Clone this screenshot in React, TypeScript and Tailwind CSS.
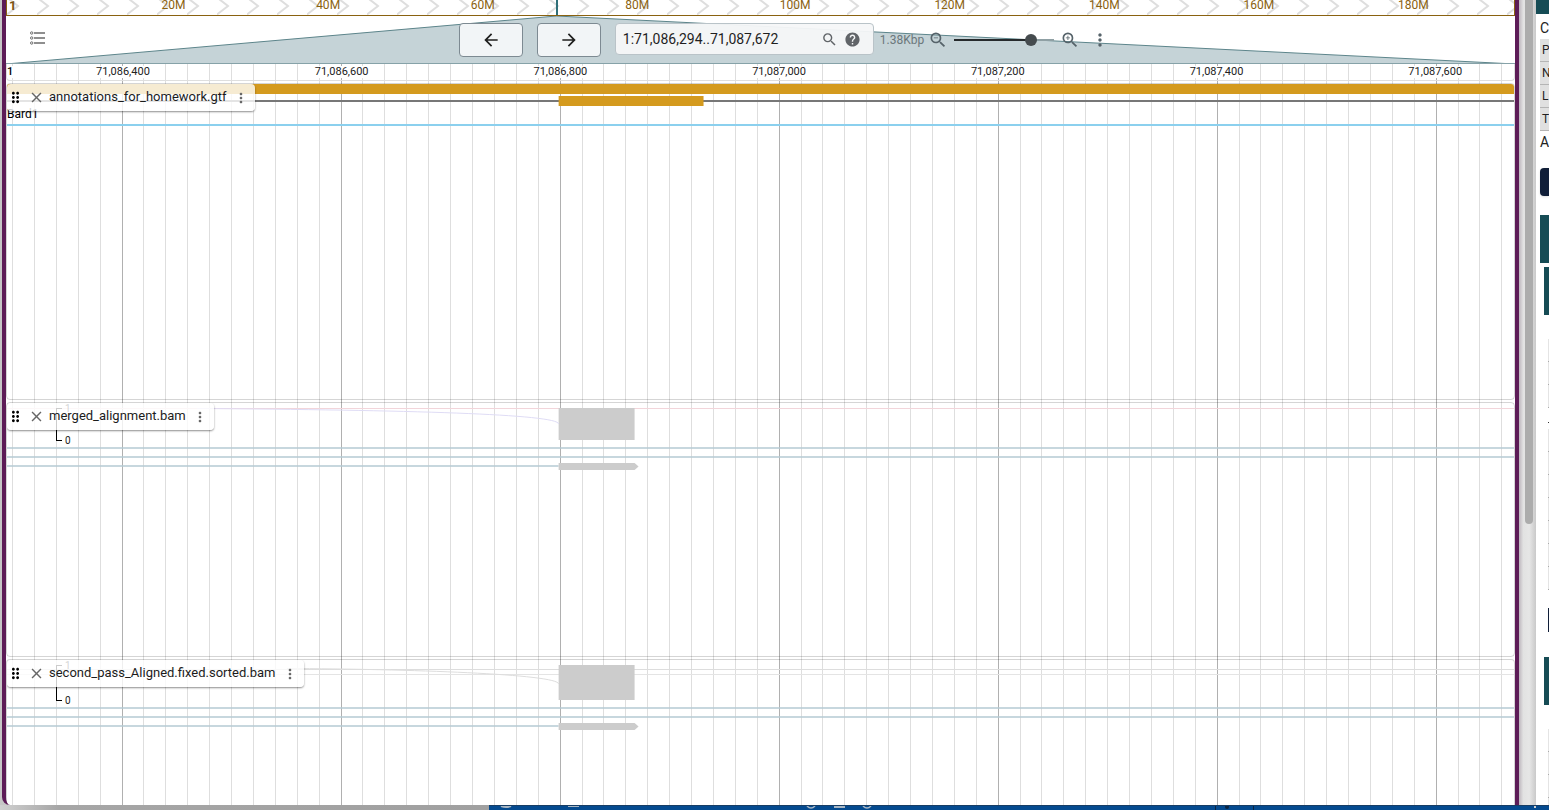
import React from "react";
import {
  MdArrowBack,
  MdArrowForward,
  MdClose,
  MdDragIndicator,
  MdHelp,
  MdMoreVert,
  MdSearch,
  MdZoomIn,
  MdZoomOut,
} from "react-icons/md";

const START = 71086294;
const SPAN = 1378;
const MAJOR = 200;
const MINOR = 20;

const percent = (bp: number) => `${((bp - START) / SPAN) * 100}%`;

const ticks: number[] = [];
for (let bp = Math.ceil(START / MINOR) * MINOR; bp < START + SPAN; bp += MINOR) {
  ticks.push(bp);
}
const majorTicks = ticks.filter((bp) => bp % MAJOR === 0);

const GENOME_MB = 195;
const overviewTicks = [20, 40, 60, 80, 100, 120, 140, 160, 180];

function Overview() {
  return (
    <div className="relative h-4 shrink-0 overflow-hidden border-x border-b border-[#8a6210] bg-white">
      <svg className="absolute inset-0 h-full w-full" aria-hidden="true">
        <defs>
          <pattern id="chevrons" width="30" height="20" patternUnits="userSpaceOnUse">
            <path d="M0 -2.500L11 6L0 14.500" fill="none" stroke="#dedede" strokeWidth="2" />
          </pattern>
        </defs>
        <rect width="100%" height="15" fill="url(#chevrons)" />
      </svg>
      <span className="absolute -top-0.5 left-0.5 text-[13px] font-bold leading-4 text-[#7a5310]">1</span>
      {overviewTicks.map((mb) => (
        <span
          key={mb}
          className="absolute -top-[3px] text-xs leading-4 text-[#8a6210]"
          style={{ left: `${(mb / GENOME_MB) * 100}%` }}
        >
          {mb}M
        </span>
      ))}
      <div
        className="absolute inset-y-0 w-0.5 bg-[#2f6f78]"
        style={{ left: `${(START / 1e6 / GENOME_MB) * 100}%` }}
      />
    </div>
  );
}

function TrackListIcon() {
  return (
    <svg width="16" height="16" viewBox="0 0 16 16" fill="none" stroke="#6b6b6b" aria-hidden="true">
      <circle cx="1.700" cy="3" r="1.200" />
      <circle cx="1.700" cy="8" r="1.200" />
      <circle cx="1.700" cy="13" r="1.200" />
      <path d="M4 3H15M4 8H15M4 13H15" strokeWidth="1.400" />
    </svg>
  );
}

function Toolbar() {
  const navButton =
    "flex h-[34px] w-16 items-center justify-center rounded border border-[#7d8a92] bg-[#f2f5f7] text-[#1f1f1f]";
  return (
    <div className="relative h-12 shrink-0">
      <svg
        className="absolute inset-0 h-full w-full"
        viewBox="0 0 1508 48"
        preserveAspectRatio="none"
        aria-hidden="true"
      >
        <path d="M550 0L0 48H1508Z" fill="#c5d3d7" />
        <path d="M0 48L550 0L1508 48" fill="none" stroke="#5d858b" vectorEffect="non-scaling-stroke" />
        <path d="M0 47.500H1508" stroke="#86a2a8" vectorEffect="non-scaling-stroke" />
      </svg>
      <div className="relative flex h-full items-center">
        <button type="button" aria-label="Open track selector" className="mb-1 flex w-12 pl-6">
          <TrackListIcon />
        </button>
        <div className="flex flex-1 items-center justify-center">
          <button type="button" aria-label="Pan left" className={navButton}>
            <MdArrowBack size={20} />
          </button>
          <button type="button" aria-label="Pan right" className={`ml-3.5 ${navButton}`}>
            <MdArrowForward size={20} />
          </button>
          <div className="ml-3.5 mb-0.5 flex h-8 w-[259px] items-center rounded border border-[#b9c3c8] bg-[#f5f7f8]/95 pl-[7px] pr-3 text-[#606468]">
            <input
              aria-label="Location"
              defaultValue="1:71,086,294..71,087,672"
              className="min-w-0 flex-1 bg-transparent text-sm text-[#1f1f1f] outline-none"
            />
            <button type="button" aria-label="Search">
              <MdSearch size={17} />
            </button>
            <button type="button" aria-label="Help" className="ml-1.5">
              <MdHelp size={17} />
            </button>
          </div>
          <span className="ml-1.5 text-xs text-[#6b777b]">1.38Kbp</span>
          <button type="button" aria-label="Zoom out" className="ml-1 text-[#56636a]">
            <MdZoomOut size={20} />
          </button>
          <input
            type="range"
            aria-label="Zoom"
            defaultValue={80}
            className="mx-1.5 h-3 w-[100px] appearance-none bg-transparent [&::-webkit-slider-runnable-track]:h-0.5 [&::-webkit-slider-runnable-track]:bg-[linear-gradient(to_right,#262a2c_76%,#8fa0a4_76%)] [&::-webkit-slider-thumb]:-mt-[5px] [&::-webkit-slider-thumb]:h-3 [&::-webkit-slider-thumb]:w-3 [&::-webkit-slider-thumb]:appearance-none [&::-webkit-slider-thumb]:rounded-full [&::-webkit-slider-thumb]:bg-[#454b4e]"
          />
          <button type="button" aria-label="Zoom in" className="text-[#56636a]">
            <MdZoomIn size={20} />
          </button>
          <button type="button" aria-label="View options" className="ml-2.5 text-[#56636a]">
            <MdMoreVert size={20} />
          </button>
        </div>
      </div>
    </div>
  );
}

function Gridlines() {
  return (
    <svg className="absolute inset-0 h-full w-full" shapeRendering="crispEdges" aria-hidden="true">
      {ticks.map((bp) => (
        <line
          key={bp}
          x1={percent(bp)}
          x2={percent(bp)}
          y1="0"
          y2="100%"
          stroke={bp % MAJOR === 0 ? "#b0b0b0" : "#dedede"}
        />
      ))}
    </svg>
  );
}

function Ruler() {
  return (
    <div className="relative h-[17px] shrink-0 overflow-hidden rounded-b border-x border-b border-[#dedede]">
      <span className="absolute left-0 top-0.5 bg-white text-[11px] font-medium leading-3 text-black">1</span>
      {majorTicks.map((bp) => (
        <span
          key={bp}
          className="absolute top-0.5 -translate-x-1/2 bg-white text-[11px] leading-3 text-[#222]"
          style={{ left: percent(bp) }}
        >
          {bp.toLocaleString("en-US")}
        </span>
      ))}
    </div>
  );
}

function TrackLabel({ name }: { name: string }) {
  return (
    <div className="absolute left-0 top-0 flex h-[27px] items-center rounded bg-white/80 pr-1.5 text-[#666] shadow-[0_1px_2px_rgba(0,0,0,0.45)]">
      <button type="button" aria-label={`Move ${name}`} className="text-black">
        <MdDragIndicator size={17} />
      </button>
      <button type="button" aria-label={`Close ${name}`} className="ml-1">
        <MdClose size={17} />
      </button>
      <span className="ml-1 whitespace-nowrap pb-0.5 text-[13px] leading-5 text-[#1c1c1c]">{name}</span>
      <button type="button" aria-label={`${name} menu`} className="ml-1.5">
        <MdMoreVert size={16} />
      </button>
    </div>
  );
}

function Track({ name, className, children }: { name: string; className: string; children: React.ReactNode }) {
  return (
    <section
      aria-label={name}
      className={`relative overflow-hidden rounded border border-[#2c2c2c]/20 ${className}`}
    >
      {children}
      <TrackLabel name={name} />
    </section>
  );
}

function AnnotationTrack() {
  return (
    <Track name="annotations_for_homework.gtf" className="h-[317px] shrink-0">
      <span className="absolute left-0 top-6 text-xs leading-3 text-black">Bard1</span>
      <svg className="absolute left-0 top-0 h-12 w-full" viewBox="0 0 1508 48" preserveAspectRatio="none" aria-hidden="true">
        <path d="M0 17H1508" stroke="#777777" strokeWidth="2" />
        <rect width="1508" height="10" fill="#d49a1e" />
        <rect x="552" y="12" width="145" height="10" fill="#d49a1e" />
        <path d="M0 41H1508" stroke="#8bd0ee" strokeWidth="2" />
      </svg>
    </Track>
  );
}

interface AlignmentProps {
  name: string;
  className: string;
  coverage: number;
  lines: { y: number; color: string }[];
  arc: string;
  arcColor: string;
}

function AlignmentTrack({ name, className, coverage, lines, arc, arcColor }: AlignmentProps) {
  const base = 5 + coverage;
  return (
    <Track name={name} className={className}>
      <svg className="absolute left-0 top-0 h-20 w-full" viewBox="0 0 1508 80" preserveAspectRatio="none" aria-hidden="true">
        {lines.map((line) => (
          <path key={line.y} d={`M0 ${line.y}H1508`} stroke={line.color} />
        ))}
        <rect x="552" y="5" width="76" height={coverage} fill="#cccccc" />
        <path d={arc} fill="none" stroke={arcColor} />
        <g stroke="#b4cad3" strokeOpacity="0.75" strokeWidth="2">
          <path d={`M0 ${base + 8}H1508`} />
          <path d={`M0 ${base + 17}H1508`} />
          <path d={`M0 ${base + 26}H552`} />
        </g>
        <path d={`M552 ${base + 23}H628L632 ${base + 26.5}L628 ${base + 30}H552Z`} fill="#cccccc" />
      </svg>
      <svg className="absolute left-12 top-0 h-20 w-8" shapeRendering="crispEdges" aria-hidden="true">
        <path d={`M7 5.500H1.500V${base + 0.5}H7`} fill="none" stroke="#000" />
      </svg>
      <div className="absolute left-[58px] top-px flex flex-col text-[10px] leading-[10px] text-[#222]">
        <span>1</span>
        <span style={{ marginTop: `${coverage - 10}px` }}>0</span>
      </div>
    </Track>
  );
}

function GenomeView() {
  return (
    <main className="flex min-w-0 flex-1 flex-col overflow-hidden rounded-bl-lg border-x-4 border-[#5d1c57] bg-white">
      <Overview />
      <Toolbar />
      <div className="relative flex min-h-0 flex-1 flex-col">
        <Gridlines />
        <Ruler />
        <div className="relative mt-0.5 flex min-h-0 flex-1 flex-col gap-0.5">
          <AnnotationTrack />
          <AlignmentTrack
            name="merged_alignment.bam"
            className="h-[255px] shrink-0"
            coverage={32}
            lines={[{ y: 5.5, color: "#f2d5da" }]}
            arc="M190 5.500C400 7 552 11 552 21"
            arcColor="#dfdcf5"
          />
          <AlignmentTrack
            name="second_pass_Aligned.fixed.sorted.bam"
            className="flex-1 rounded-b-none border-b-0"
            coverage={35}
            lines={[
              { y: 9.5, color: "#dddddd" },
              { y: 14.5, color: "#e4e4e4" },
            ]}
            arc="M280 8.500C400 9 552 14 552 24"
            arcColor="#dddddd"
          />
        </div>
      </div>
    </main>
  );
}

function PageScrollbar() {
  return (
    <div className="flex w-[17px] shrink-0 justify-center bg-[linear-gradient(to_right,#bdb6bd,#e2e2e2_25%,#e6e6e6_60%,#c9c9c9)] pl-0.5">
      <div className="h-[524px] w-2 rounded-b-full bg-[#acacac]" />
    </div>
  );
}

function Rows({ count }: { count: number }) {
  return (
    <div className="ml-auto w-px">
      {Array.from({ length: count }, (_, i) => (
        <div key={i} className="h-[23px] border-b border-[#aaa] bg-[#e4e4e4]" />
      ))}
    </div>
  );
}

function SidePage() {
  return (
    <aside className="flex w-[13px] shrink-0 flex-col overflow-hidden bg-white text-sm text-[#222]">
      <div className="h-3.5 shrink-0 bg-[#164c55]" />
      <div className="ml-1 flex h-[25px] shrink-0 items-center pt-0.5">C</div>
      <ul className="ml-1 shrink-0 text-xs">
        {["P", "N", "L", "T"].map((letter) => (
          <li key={letter} className="flex h-[23px] items-center border-b border-[#b5b5b5] bg-[#e0e0e0] pl-0.5">
            {letter}
          </li>
        ))}
      </ul>
      <div className="ml-1 flex h-6 shrink-0 items-center pb-0.5">A</div>
      <div className="ml-1 mt-[13px] h-7 shrink-0 rounded-l bg-[#101e38] shadow" />
      <div className="ml-1 mt-[19px] h-12 shrink-0 bg-[#164c55]" />
      <div className="ml-2 mt-1 h-12 shrink-0 bg-[#164c55]" />
      <div className="mt-6 shrink-0">
        <Rows count={3} />
      </div>
      <div className="ml-auto mt-3.5 h-px w-px shrink-0 bg-[#333]" />
      <div className="mt-1.5 shrink-0">
        <Rows count={7} />
      </div>
      <div className="ml-auto mt-[18px] h-6 w-px shrink-0 bg-[#101e38]" />
      <div className="ml-2 mt-[25px] h-12 shrink-0 bg-[#164c55]" />
      <div className="mt-6 shrink-0">
        <Rows count={4} />
      </div>
    </aside>
  );
}

function DesktopEdge() {
  return (
    <footer className="flex h-[5px] shrink-0">
      <div className="w-[489px] shrink-0 bg-[linear-gradient(to_right,#d0d0d0,#a6a6a6_12%,#a0a0a0)]" />
      <div className="min-w-0 flex-1 border-t border-[#173d64] bg-[#044a8f]">
        <svg width="1060" height="4" fill="none" aria-hidden="true">
          <path d="M12 0Q17 2 22 0M79 0H90" stroke="#a9b7c4" strokeWidth="2" />
          <path d="M318 0Q322 4 326 0M374 0Q378 4 382 0" stroke="#a9b7c4" strokeWidth="1.500" />
          <path d="M345 1H356" stroke="#a9b7c4" strokeWidth="2" />
          <path d="M726.500 0V4M764.500 0V4" stroke="#0b2440" />
          <circle cx="738" cy="1" r="2" fill="#0b2440" />
          <path d="M1046 0V2" stroke="#d0d0d0" strokeWidth="2" />
        </svg>
      </div>
    </footer>
  );
}

export default function App() {
  return (
    <div className="flex h-screen flex-col overflow-hidden bg-[#c6c6c6] font-[Roboto,sans-serif]">
      <div className="flex min-h-0 flex-1 pl-0.5">
        <GenomeView />
        <PageScrollbar />
        <SidePage />
      </div>
      <DesktopEdge />
    </div>
  );
}
